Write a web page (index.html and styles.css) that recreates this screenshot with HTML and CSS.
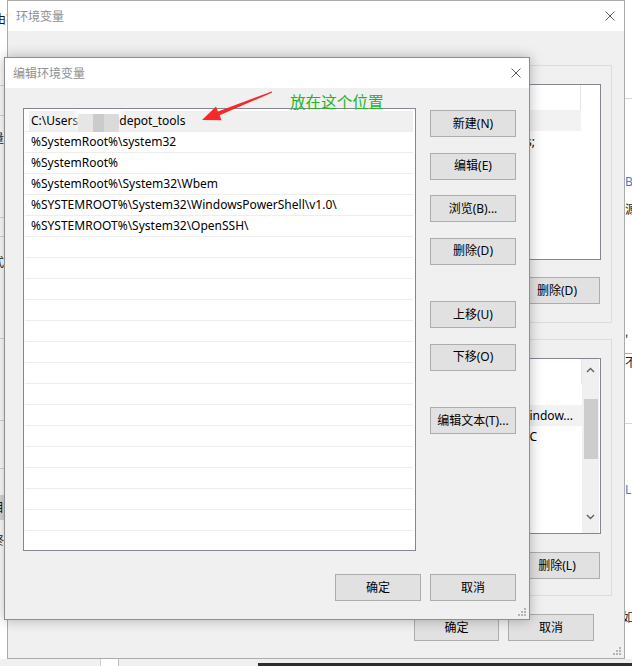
FILE: index.html
```html
<!DOCTYPE html>
<html lang="zh-CN">
<head>
<meta charset="utf-8">
<title>编辑环境变量</title>
<link rel="stylesheet" href="styles.css">
</head>
<body>
<div class="desktop">
  <div class="bg-left">
    <span class="bt t1">由不</span>
    <span class="bl l1"></span>
    <span class="bl l2"></span>
    <span class="bt t2">量</span>
    <span class="bl l3"></span>
    <span class="bl l4"></span>
    <span class="bt t3">式</span>
    <span class="bl l5"></span>
    <span class="bl l6"></span>
    <span class="bl l7"></span>
    <span class="band"></span>
    <span class="bt t4">目</span>
    <span class="bt t5">终</span>
  </div>
  <div class="bg-right">
    <span class="rl r1"></span>
    <span class="rt rt1 blue">B</span>
    <span class="rt rt2">源</span>
    <span class="rt rt3">'</span>
    <span class="rl r2"></span>
    <span class="rt rt4">不</span>
    <span class="rl r3"></span>
    <span class="rt rt5 blue">L</span>
    <span class="rt rt6">如</span>
  </div>
  <div class="bg-bottom">
    <span class="vb v1"></span>
    <span class="darkbar"></span>
  </div>

  <section class="win back">
    <header class="titlebar">
      <span class="title">环境变量</span>
      <svg class="close" width="10" height="10" viewBox="0 0 10 10"><path d="M0.5 0.5L9.5 9.5M9.5 0.5L0.5 9.5" stroke="#5c5c5c" stroke-width="1" fill="none"/></svg>
    </header>
    <div class="body back-body">
      <div class="group g1">
        <div class="lv">
          <div class="lv-main">
            <div class="lv-head"></div>
            <div class="lv-row sel"></div>
            <div class="lv-row"><span class="val end1">s;</span></div>
          </div>
        </div>
        <div class="grp-actions"><button class="btn">删除(D)</button></div>
      </div>
      <div class="group g2">
        <div class="lv">
          <div class="lv-main">
            <div class="lv-head"></div>
            <div class="lv-row"></div>
            <div class="lv-row sel"><span class="val end2">Window...</span></div>
            <div class="lv-row"><span class="val end3">C</span></div>
          </div>
          <div class="scrollbar">
            <svg class="chev" width="9" height="6" viewBox="0 0 9 6"><path d="M1 5L4.5 1.5L8 5" stroke="#606060" stroke-width="1.4" fill="none"/></svg>
            <div class="thumb"></div>
            <svg class="chev down" width="9" height="6" viewBox="0 0 9 6"><path d="M1 1L4.5 4.5L8 1" stroke="#606060" stroke-width="1.4" fill="none"/></svg>
          </div>
        </div>
        <div class="grp-actions g2a"><button class="btn">删除(L)</button></div>
      </div>
      <div class="footer back-footer">
        <button class="btn ok">确定</button>
        <button class="btn">取消</button>
      </div>
    </div>
    <svg class="grip" width="8" height="8" viewBox="0 0 8 8"><g fill="#b4b4b4"><rect x="6" y="0" width="2" height="2"/><rect x="3" y="3" width="2" height="2"/><rect x="6" y="3" width="2" height="2"/><rect x="0" y="6" width="2" height="2"/><rect x="3" y="6" width="2" height="2"/><rect x="6" y="6" width="2" height="2"/></g></svg>
  </section>

  <section class="win front">
    <header class="titlebar">
      <span class="title">编辑环境变量</span>
      <svg class="close" width="10" height="10" viewBox="0 0 10 10"><path d="M0.5 0.5L9.5 9.5M9.5 0.5L0.5 9.5" stroke="#5c5c5c" stroke-width="1" fill="none"/></svg>
    </header>
    <div class="body front-body">
      <div class="pathlist">
        <div class="row selected"><span class="cell">C:\Users<span class="mosaic"></span>depot_tools</span></div>
        <div class="row"><span class="cell">%SystemRoot%\system32</span></div>
        <div class="row"><span class="cell">%SystemRoot%</span></div>
        <div class="row"><span class="cell">%SystemRoot%\System32\Wbem</span></div>
        <div class="row"><span class="cell">%SYSTEMROOT%\System32\WindowsPowerShell\v1.0\</span></div>
        <div class="row"><span class="cell">%SYSTEMROOT%\System32\OpenSSH\</span></div>
        <div class="row"></div>
        <div class="row"></div>
        <div class="row"></div>
        <div class="row"></div>
        <div class="row"></div>
        <div class="row"></div>
        <div class="row"></div>
        <div class="row"></div>
        <div class="row"></div>
        <div class="row"></div>
        <div class="row"></div>
        <div class="row"></div>
        <div class="row"></div>
        <div class="row"></div>
        <div class="row"></div>
      </div>
      <div class="side">
        <button class="btn">新建(N)</button>
        <button class="btn">编辑(E)</button>
        <button class="btn">浏览(B)...</button>
        <button class="btn">删除(D)</button>
        <button class="btn sep">上移(U)</button>
        <button class="btn">下移(O)</button>
        <button class="btn sep">编辑文本(T)...</button>
      </div>
      <div class="footer front-footer">
        <button class="btn">确定</button>
        <button class="btn">取消</button>
      </div>
    </div>
    <svg class="grip" width="8" height="8" viewBox="0 0 8 8"><g fill="#b4b4b4"><rect x="6" y="0" width="2" height="2"/><rect x="3" y="3" width="2" height="2"/><rect x="6" y="3" width="2" height="2"/><rect x="0" y="6" width="2" height="2"/><rect x="3" y="6" width="2" height="2"/><rect x="6" y="6" width="2" height="2"/></g></svg>
  </section>

  <svg class="arrow" width="632" height="140" viewBox="0 0 632 140">
    <polygon points="272.3,92.6 219.6,115.3 221.6,120.2 202,120 216,106.6 217.9,111.4 271.7,91.4" fill="#f42a2a"/>
  </svg>
  <div class="note">放在这个位置</div>
</div>
</body>
</html>
```

FILE: styles.css
```css
* { box-sizing: border-box; margin: 0; padding: 0; }
html, body { width: 632px; height: 666px; overflow: hidden; }
body {
  background: #fff;
  font-family: "Noto Sans", "Noto Sans CJK SC", sans-serif;
  font-size: 12px;
  color: #000;
}
.desktop { position: relative; width: 632px; height: 666px; overflow: hidden; background: #fff; }

/* background application fragments */
.bg-left { position: absolute; left: 0; top: 0; width: 7px; height: 666px; overflow: hidden; background: #fff; }
.bl { position: absolute; left: 0; width: 7px; height: 1px; background: #dadada; }
.l1 { top: 85px; } .l2 { top: 115px; } .l3 { top: 217px; } .l4 { top: 236px; }
.l5 { top: 338px; } .l6 { top: 420px; } .l7 { top: 468px; }
.band { position: absolute; left: 0; top: 495px; width: 7px; height: 25px; background: #d9d9d9; }
.bt { position: absolute; left: -8px; font-family: "Noto Sans CJK SC", sans-serif; font-size: 12px; line-height: 14px; color: #1a1a1a; white-space: nowrap; }
.t1 { top: 12px; left: -6px; }
.t2 { top: 131px; } .t3 { top: 255px; } .t4 { top: 500px; } .t5 { top: 533px; }

.bg-right { position: absolute; left: 625px; top: 0; width: 7px; height: 666px; overflow: hidden; background: #fff; }
.rl { position: absolute; left: 0; width: 7px; height: 1px; background: #d6d6d6; }
.r1 { top: 98px; } .r2 { top: 353px; background: #c9a77a; } .r3 { top: 423px; }
.rt { position: absolute; left: 0; font-family: "Noto Sans CJK SC", sans-serif; font-size: 12px; line-height: 14px; color: #222; white-space: nowrap; }
.rt.blue { color: #3a7fd0; font-family: "Noto Sans", sans-serif; }
.rt1 { top: 175px; } .rt2 { top: 202px; } .rt3 { top: 333px; } .rt4 { top: 355px; }
.rt5 { top: 483px; } .rt6 { top: 610px; left: -3px; }

.bg-bottom { position: absolute; left: 0; top: 659px; width: 632px; height: 7px; background: #f0f0f0; }
.vb { position: absolute; top: 0; width: 19px; height: 7px; background: #fff; border-left: 1px solid #cfcfcf; border-right: 1px solid #bdbdbd; }
.v1 { left: 100px; }
.darkbar { position: absolute; left: 258px; top: 4px; width: 374px; height: 3px; background: #2e2e2e; }

/* windows */
.win { position: absolute; background: #f0f0f0; border: 1px solid #a0a0a0; display: flex; flex-direction: column; }
.back { left: 7px; top: 0; width: 618px; height: 659px; border-color: #ababab; }
.front { left: 4px; top: 57px; width: 526px; height: 563px; border-color: #8e8e8e; box-shadow: 0 0 12px rgba(0, 0, 0, 0.28); }

.titlebar { height: 30px; flex: none; background: #fff; display: flex; align-items: center; justify-content: space-between; padding: 0 8px; }
.back .titlebar { padding-right: 9px; }
.title { font-family: "Noto Sans CJK SC", sans-serif; font-size: 12px; color: #8f8f8f; line-height: 16px; }
.close { display: block; }

.btn {
  height: 27px; width: 86px; background: #e1e1e1; border: 1px solid #adadad;
  font-family: "Noto Sans", "Noto Sans CJK SC", sans-serif; font-size: 12px; color: #000;
  display: flex; align-items: center; justify-content: center; line-height: 14px;
}

.grip { position: absolute; right: 3px; bottom: 3px; }

/* back dialog */
.back-body { flex: 1; display: flex; flex-direction: column; padding: 34px 12px 17px 12px; }
.group { border: 1px solid #dcdcdc; padding: 18px 10px 18px 10px; display: flex; flex-direction: column; }
.g1 { height: 258px; }
.g2 { height: 257px; margin-top: 16px; padding-bottom: 16px; }
.lv { height: 176px; background: #fff; border: 1px solid #828790; display: flex; overflow: hidden; }
.lv-main { flex: 1; display: flex; flex-direction: column; padding-right: 19px; }
.g2 .lv-main { padding-right: 0; }
.lv-head { height: 25px; flex: none; border-right: 1px solid #e5e5e5; width: 100%; }
.lv-row { height: 21px; flex: none; display: flex; justify-content: flex-end; align-items: center; overflow: hidden; white-space: nowrap; }
.lv-row.sel { background: #f2f2f2; }
.val { font-size: 12px; line-height: 14px; }
.end1 { padding-right: 46px; }
.end2 { padding-right: 9px; }
.end3 { padding-right: 45px; }
.scrollbar { width: 17px; flex: none; margin-right: 1px; background: #f0f0f0; display: flex; flex-direction: column; align-items: center; padding-top: 8px; }
.thumb { width: 14px; height: 60px; background: #cdcdcd; margin-top: 26px; }
.chev { display: block; }
.chev.down { margin-top: 55px; }
.grp-actions { display: flex; justify-content: flex-end; margin-top: 17px; padding-right: 1px; }
.g2a { margin-top: 18px; }
.back-footer { display: flex; justify-content: flex-end; gap: 9px; margin-top: 18px; padding-right: 18px; }
.back-footer .ok { width: 85px; }

/* front dialog */
.front-body {
  flex: 1; display: grid; grid-template-columns: 393px 86px; grid-template-rows: 443px 27px;
  column-gap: 14px; row-gap: 23px; padding: 20px 13px 18px 18px;
}
.pathlist { background: #fff; border: 1px solid #828790; padding: 2px 2px 0 1px; overflow: hidden; }
.row { height: 21px; border-bottom: 1px solid #ededed; display: flex; align-items: stretch; }
.cell { flex: 1; margin-left: 4px; padding-left: 2px; display: flex; align-items: center; white-space: nowrap; font-size: 12px; line-height: 14px; }
.row.selected .cell { background: #f0f0f0; }
.mosaic {
  display: inline-block; width: 41px; height: 18px; margin-top: 4px;
  background: linear-gradient(90deg, #e6e6e6 0 15px, #cbcbcb 15px 26px, #dadada 26px 41px);
  box-shadow: 0 -6px 6px 2px rgba(255, 255, 255, 0.9);
  border-radius: 2px;
}
.side { display: flex; flex-direction: column; gap: 15.5px; padding-top: 2px; }
.side .sep { margin-top: 21px; }
.front-footer { grid-column: 1 / span 2; display: flex; justify-content: flex-end; gap: 9px; }

/* annotations */
.arrow { position: absolute; left: 0; top: 0; }
.note {
  position: absolute; left: 290px; top: 92px;
  font-family: "Noto Sans CJK SC", sans-serif; font-size: 15.6px; line-height: 18px;
  color: #22b422;
}
```
